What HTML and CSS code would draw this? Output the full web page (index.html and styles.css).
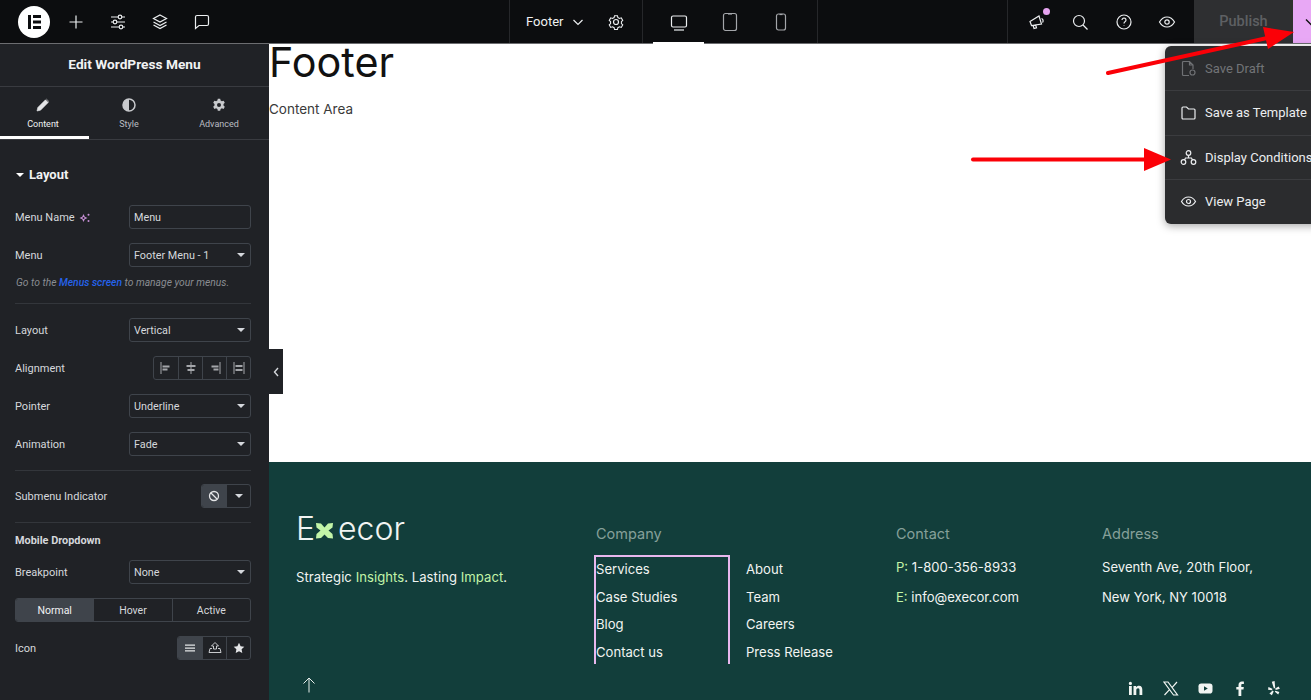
FILE: index.html
```html
<!DOCTYPE html>
<html lang="en">
<head>
<meta charset="utf-8">
<title>Elementor – Footer</title>
<link rel="stylesheet" href="styles.css">
</head>
<body>
<header class="topbar">
  <div class="tb-left">
    <span class="logo"><svg width="32" height="32" viewBox="0 0 32 32"><circle cx="16" cy="16" r="16" fill="#fff"/><path d="M10 9h3v14h-3zM15 9h8v3h-8zM15 14.500h8v3h-8zM15 20h8v3h-8z" fill="#0c0d0f"/></svg></span>
    <svg class="tb-ic" width="20" height="20" viewBox="0 0 20 20"><path d="M10 3.500v13M3.500 10h13" class="st"/></svg>
    <svg class="tb-ic" width="20" height="20" viewBox="0 0 20 20"><path d="M3 5h7M14 5h3M3 10h2M9 10h8M3 15h8M15 15h2" class="st"/><circle cx="12" cy="5" r="1.800" class="st"/><circle cx="7" cy="10" r="1.800" class="st"/><circle cx="13" cy="15" r="1.800" class="st"/></svg>
    <svg class="tb-ic" width="20" height="20" viewBox="0 0 20 20"><path d="M10 3l6.500 3.500L10 10 3.500 6.500zM3.500 10l6.500 3.500 6.500-3.500M3.500 13l6.500 3.500 6.500-3.500" class="st"/></svg>
    <svg class="tb-ic" width="20" height="20" viewBox="0 0 20 20"><path d="M5 3.500h10a1.500 1.500 0 0 1 1.500 1.500v7a1.500 1.500 0 0 1-1.500 1.500H7l-3.500 3V5A1.500 1.500 0 0 1 5 3.500z" class="st"/></svg>
  </div>
  <div class="tb-doc">
    <span class="doc-name">Footer</span>
    <svg width="12" height="12" viewBox="0 0 12 12"><path d="M1.500 4l4.500 4.500L10.500 4" class="st"/></svg>
    <svg class="doc-gear" width="18" height="18" viewBox="0 0 18 18"><path d="M7.400 2h3.200l.5 2.100 1.800 1 2-.7 1.600 2.800-1.500 1.500v2l1.500 1.500-1.600 2.800-2-.7-1.800 1-.5 2.100H7.400l-.5-2.100-1.800-1-2 .7-1.600-2.800 1.500-1.500v-2L1.500 7.200l1.600-2.800 2 .7 1.800-1z" transform="translate(.9 .9) scale(.9)" class="st"/><circle cx="9" cy="9" r="2.500" class="st"/></svg>
  </div>
  <div class="tb-devices">
    <span class="device active"><svg width="20" height="20" viewBox="0 0 20 20"><rect x="2.500" y="3" width="15" height="11" rx="1.500" class="st"/><path d="M5 17h10" class="st"/></svg></span>
    <span class="device"><svg width="20" height="20" viewBox="0 0 20 20"><rect x="3.500" y="1.500" width="13" height="17" rx="2" class="st dim"/><path d="M8 2h4" class="st dim"/></svg></span>
    <span class="device"><svg width="20" height="20" viewBox="0 0 20 20"><rect x="5.500" y="2" width="9" height="16" rx="2" class="st dim"/><path d="M8.500 2.500h3" class="st dim"/></svg></span>
  </div>
  <div class="tb-spacer"></div>
  <div class="tb-right">
    <span class="notify"><svg width="20" height="20" viewBox="0 0 20 20"><path d="M3 9.500l9-5.500 2.500 8-10 1.500zM6 13l1 3.500 2.500-.7-1-3.300M14.500 6.500a2.500 2.500 0 0 1 1 4" class="st"/></svg><i class="dot"></i></span>
    <svg width="20" height="20" viewBox="0 0 20 20"><circle cx="9" cy="9" r="5.500" class="st"/><path d="M13 13l4.500 4.500" class="st"/></svg>
    <svg width="20" height="20" viewBox="0 0 20 20"><circle cx="10" cy="10" r="7" class="st"/><path d="M8 8a2 2 0 1 1 3 1.800c-.7.400-1 .8-1 1.700M10 13.500v.600" class="st"/></svg>
    <svg width="20" height="20" viewBox="0 0 20 20"><path d="M2.500 10C4.500 6.500 7 5 10 5s5.500 1.500 7.500 5c-2 3.500-4.500 5-7.500 5s-5.500-1.500-7.500-5z" class="st"/><circle cx="10" cy="10" r="2.200" class="st"/></svg>
  </div>
  <div class="publish">Publish</div>
  <div class="publish-caret"><svg width="14" height="14" viewBox="0 0 14 14"><path d="M2 4.500l5 5 5-5" fill="none" stroke="#111" stroke-width="1.400"/></svg></div>
</header>

<div class="workspace">
  <aside class="panel">
    <div class="panel-title">Edit WordPress Menu</div>
    <nav class="panel-tabs">
      <div class="ptab active">
        <svg width="14" height="14" viewBox="0 0 14 14"><path d="M1 13l.8-3.500L9.500 1.800l2.700 2.700-7.700 7.700zM10.300 1l2.700 2.700" fill="#e4e5e7" stroke="#e4e5e7" stroke-width=".6"/></svg>
        <span>Content</span>
      </div>
      <div class="ptab">
        <svg width="14" height="14" viewBox="0 0 14 14"><circle cx="7" cy="7" r="6" fill="none" stroke="#c8cacd" stroke-width="1.500"/><path d="M7 1a6 6 0 0 0 0 12z" fill="#c8cacd"/></svg>
        <span>Style</span>
      </div>
      <div class="ptab">
        <svg width="14" height="14" viewBox="0 0 14 14"><path d="M5.800 .8h2.400l.4 1.800 1.300.7 1.700-.6 1.200 2.100-1.300 1.200v1.600l1.300 1.200-1.200 2.100-1.700-.6-1.300.7-.4 1.800H5.800l-.4-1.800-1.300-.7-1.700.6L1.200 8.800l1.300-1.200V6L1.200 4.800l1.200-2.100 1.700.6 1.300-.7z" fill="#c8cacd"/><circle cx="7" cy="6.900" r="2" fill="#202226"/></svg>
        <span>Advanced</span>
      </div>
    </nav>
    <div class="panel-body">
      <div class="section-head"><i class="caret white"></i>Layout</div>

      <div class="row"><label>Menu Name <svg class="ai" width="11" height="11" viewBox="0 0 11 11"><path d="M4.500 2l1.300 2.700L8.500 6 5.800 7.300 4.500 10 3.200 7.300.5 6l2.700-1.300z" fill="#c78fd6"/><circle cx="4.500" cy="6" r="1" fill="#202226"/><circle cx="9.500" cy="2.800" r="1" fill="#c78fd6"/><circle cx="9.500" cy="9" r="1" fill="#c78fd6"/></svg></label><div class="field">Menu</div></div>
      <div class="row"><label>Menu</label><div class="field sel">Footer Menu - 1<i class="caret"></i></div></div>
      <p class="note">Go to the <a>Menus screen</a> to manage your menus.</p>
      <hr class="sep first">

      <div class="row"><label>Layout</label><div class="field sel">Vertical<i class="caret"></i></div></div>
      <div class="row"><label>Alignment</label>
        <div class="btn-group align">
          <span><svg width="12" height="12" viewBox="0 0 12 12"><path d="M1 0v12" class="g"/><path d="M2.500 3.500h7v2h-7zM2.500 6.500h5v2h-5z" fill="#a4a6aa"/></svg></span>
          <span><svg width="12" height="12" viewBox="0 0 12 12"><path d="M6 0v12" class="g"/><path d="M1.500 3h9v2h-9zM2.500 7h7v2h-7z" fill="#a4a6aa"/></svg></span>
          <span><svg width="12" height="12" viewBox="0 0 12 12"><path d="M11 0v12" class="g"/><path d="M2.500 3.500h7v2h-7zM4.500 6.500h5v2h-5z" fill="#a4a6aa"/></svg></span>
          <span><svg width="12" height="12" viewBox="0 0 12 12"><path d="M1 0v12M11 0v12" class="g"/><path d="M2.500 3h7v2h-7zM2.500 7h7v2h-7z" fill="#a4a6aa"/></svg></span>
        </div>
      </div>
      <div class="row"><label>Pointer</label><div class="field sel">Underline<i class="caret"></i></div></div>
      <div class="row"><label>Animation</label><div class="field sel">Fade<i class="caret"></i></div></div>
      <hr class="sep second">

      <div class="row"><label>Submenu Indicator</label>
        <div class="btn-group indicator">
          <span class="on"><svg width="12" height="12" viewBox="0 0 12 12"><circle cx="6" cy="6" r="4.500" fill="none" stroke="#e4e5e7" stroke-width="1.300"/><path d="M3 3l6 6" stroke="#e4e5e7" stroke-width="1.300"/></svg></span>
          <span><i class="caret"></i></span>
        </div>
      </div>
      <hr class="sep third">

      <div class="subhead">Mobile Dropdown</div>
      <div class="row"><label>Breakpoint</label><div class="field sel">None<i class="caret"></i></div></div>
      <div class="state-tabs"><span class="on">Normal</span><span>Hover</span><span>Active</span></div>
      <div class="row"><label>Icon</label>
        <div class="btn-group icons">
          <span class="on"><svg width="12" height="12" viewBox="0 0 12 12"><path d="M1 2.500h10v1.300H1zM1 5.400h10v1.300H1zM1 8.300h10v1.300H1z" fill="#e4e5e7"/></svg></span>
          <span><svg width="14" height="14" viewBox="0 0 14 14"><path d="M7 1.500L10.500 5H8.500v3h-3V5H3.500zM4 7.500H2L1 11.500h12l-1-4h-2" fill="none" stroke="#c8cacd" stroke-width="1"/></svg></span>
          <span><svg width="12" height="12" viewBox="0 0 12 12"><path d="M6 .8l1.600 3.400 3.700.5-2.700 2.600.7 3.700L6 9.200l-3.300 1.800.7-3.700L.7 4.700l3.700-.5z" fill="#e4e5e7"/></svg></span>
        </div>
      </div>
    </div>
  </aside>

  <main class="canvas">
    <section class="content">
      <h1>Footer</h1>
      <p>Content Area</p>
    </section>
    <footer class="site-footer">
      <div class="brand">
        <div class="wordmark">E<svg width="19" height="19" viewBox="0 0 19 19"><path d="M1 2l5 .5 3.500 4 3.500-4 5-.5-.5 4.500L13.500 9.500l4 3.500.5 4.500-5-.5-3.500-3.500L6 17l-5 .5.500-4.500L5.500 9.500 1.500 6.500z" fill="#c3f5a8"/></svg>ecor</div>
        <p class="tagline">Strategic <em>Insights</em>. Lasting <em>Impact</em>.</p>
        <svg class="to-top" width="14" height="16" viewBox="0 0 14 16"><path d="M7 15.500V1M1.500 6.500L7 1l5.500 5.500" fill="none" stroke="#e8efec" stroke-width="1"/></svg>
      </div>
      <div class="col-company">
        <h4>Company</h4>
        <div class="menus">
          <ul class="menu picked"><li>Services</li><li>Case Studies</li><li>Blog</li><li>Contact us</li></ul>
          <ul class="menu"><li>About</li><li>Team</li><li>Careers</li><li>Press Release</li></ul>
        </div>
      </div>
      <div class="col-contact">
        <h4>Contact</h4>
        <ul class="menu contact"><li><em>P:</em> 1-800-356-8933</li><li><em>E:</em> info@execor.com</li></ul>
      </div>
      <div class="col-address">
        <h4>Address</h4>
        <ul class="menu contact"><li>Seventh Ave, 20th Floor,</li><li>New York, NY 10018</li></ul>
        <div class="social">
          <svg width="15" height="15" viewBox="0 0 15 15"><path d="M1 5h2.800v9H1zM2.400.8a1.600 1.600 0 1 1 0 3.200 1.600 1.600 0 0 1 0-3.200zM5.500 5h2.600v1.300C8.600 5.400 9.700 4.800 11 4.800c2.600 0 3.300 1.700 3.300 4V14h-2.800V9.300c0-1.200-.3-2-1.400-2-1.200 0-1.800.9-1.800 2.100V14H5.500z" fill="#f1f4f2"/></svg>
          <svg width="16" height="15" viewBox="0 0 16 15"><path d="M1 1h4l9.500 13h-4zM14 1L9 6.700M6.500 8.700L1.500 14" fill="none" stroke="#f1f4f2" stroke-width="1.200"/></svg>
          <svg width="15" height="15" viewBox="0 0 15 15"><rect x=".5" y="2.500" width="14" height="10" rx="2.800" fill="#f1f4f2"/><path d="M6 5.300l3.800 2.200L6 9.700z" fill="#123e3b"/></svg>
          <svg width="15" height="15" viewBox="0 0 15 15"><path d="M5.500 15V8.500H3.300V6h2.200V4.200C5.500 1.900 6.900.6 8.900.6c1 0 1.800.1 2 .1v2.300H9.600c-1.100 0-1.300.5-1.300 1.300V6h2.500l-.3 2.500H8.300V15z" fill="#f1f4f2"/></svg>
          <svg width="15" height="15" viewBox="0 0 15 15"><path d="M4.800.8L7.600 0l.6 7-1.300.5zM1.400 6l4 1.700-.3 1.600-4-.6zM2.400 12.600l3.200-3 1.100.8-1.800 3.900zM8.400 9.700l4 1.200-1.200 2.700-3.400-2.900zM8.200 7.600l3.400-2.200 1.300 2.400-4.200 1.300z" fill="#f1f4f2"/></svg>
        </div>
      </div>
    </footer>
  </main>
</div>

<button class="panel-toggle" type="button" aria-label="Collapse panel"><svg width="6" height="10" viewBox="0 0 6 10"><path d="M5 1L1.500 5 5 9" fill="none" stroke="#d5d8dc" stroke-width="1.400"/></svg></button>

<div class="pub-menu">
  <div class="pm-item disabled"><svg width="17" height="17" viewBox="0 0 17 17"><path d="M9 15.500H3.500a1 1 0 0 1-1-1v-12a1 1 0 0 1 1-1h6l3.500 3.500v4M9.500 1.500V5H13" class="st dim2"/><circle cx="12.500" cy="12.500" r="2.500" class="st dim2"/></svg>Save Draft</div>
  <div class="pm-item"><svg width="17" height="17" viewBox="0 0 17 17"><path d="M2 14V4a1 1 0 0 1 1-1h3.500l2 2h5.500a1 1 0 0 1 1 1v8a1 1 0 0 1-1 1H3a1 1 0 0 1-1-1z" class="st"/></svg>Save as Template</div>
  <div class="pm-item"><svg width="17" height="17" viewBox="0 0 17 17"><circle cx="8.500" cy="4" r="2.300" class="st"/><circle cx="3.500" cy="13" r="2.300" class="st"/><circle cx="13.500" cy="13" r="2.300" class="st"/><path d="M8.500 6.500v2.500M4.500 11l1-2h6l1 2" class="st"/></svg>Display Conditions</div>
  <div class="pm-item"><svg width="17" height="17" viewBox="0 0 17 17"><path d="M1.500 8.500C3.300 5.300 5.600 4 8.500 4s5.200 1.300 7 4.500c-1.800 3.200-4.100 4.500-7 4.500s-5.200-1.300-7-4.500z" class="st"/><circle cx="8.500" cy="8.500" r="2" class="st"/></svg>View Page</div>
</div>

<svg class="annot" width="1311" height="700" viewBox="0 0 1311 700" aria-hidden="true">
  <path d="M1108 73L1272 37" stroke="#fb0007" stroke-width="4" stroke-linecap="round"/>
  <path d="M1263 27L1294 32 1268 49z" fill="#fb0007"/>
  <path d="M973 159.500H1146" stroke="#fb0007" stroke-width="4" stroke-linecap="round"/>
  <path d="M1144 148L1171 159.500 1144 171z" fill="#fb0007"/>
</svg>
</body>
</html>
```
FILE: styles.css
```css
* { box-sizing: border-box; }
html, body { margin: 0; height: 100%; }
body {
  width: 1311px; height: 700px; overflow: hidden; position: relative;
  font-family: Roboto, "Liberation Sans", sans-serif; background: #fff;
  display: flex; flex-direction: column;
}
.st { fill: none; stroke: #eceef0; stroke-width: 1.200; }
.st.dim { stroke: #a4a6aa; }
.st.dim2 { stroke: #6f7174; }
em { font-style: normal; }
ul { list-style: none; margin: 0; padding: 0; }

/* top bar */
.topbar {
  height: 44px; flex: none; display: flex; background: #0c0d0f; color: #fff;
  border-bottom: 1px solid #6c6d70; align-items: stretch;
}
.tb-left { width: 510px; display: flex; align-items: center; padding-left: 18px; border-right: 1px solid #26272a; }
.logo { display: flex; margin-right: 16px; }
.tb-ic { margin-right: 22px; }
.tb-doc { width: 133px; display: flex; align-items: center; padding-left: 16px; font-size: 13px; color: #f0f1f2; border-right: 1px solid #26272a; }
.doc-name { width: 46px; }
.doc-gear { margin-left: 23px; }
.tb-devices { width: 175px; display: flex; align-items: stretch; padding-left: 10px; border-right: 1px solid #26272a; }
.device { width: 51px; display: flex; align-items: center; justify-content: center; }
.device.active { box-shadow: inset 0 -3px 0 #fff; height: 45px; }
.tb-spacer { width: 190px; border-right: 1px solid #26272a; }
.tb-right { width: 186px; display: flex; align-items: center; gap: 23.300px; padding-left: 19px; }
.notify { position: relative; display: flex; }
.dot { position: absolute; width: 7px; height: 7px; border-radius: 50%; background: #e6a4f0; top: -4px; right: -3px; }
.publish { width: 99px; background: #2e2f31; color: #5e6063; font-size: 14.500px; font-weight: 500; display: flex; align-items: center; justify-content: center; }
.publish-caret { flex: 1; background: #e8a8f5; display: flex; align-items: center; padding-left: 11px; overflow: hidden; }
.publish-caret svg { flex: none; }

/* layout */
.workspace { flex: 1; display: flex; min-height: 0; }
.panel { width: 269px; flex: none; background: #202226; color: #d5d8dc; font-size: 11px; overflow: hidden; }
.canvas { flex: 1; min-width: 0; display: flex; flex-direction: column; }

/* panel */
.panel-title { height: 43px; padding-bottom: 2px; border-bottom: 1px solid #393b40; color: #f1f2f3; font-size: 13.700px; font-weight: 700; display: flex; align-items: center; justify-content: center; }
.panel-tabs { display: grid; grid-template-columns: 89px 80px 100px; height: 53px; border-bottom: 1px solid #393b40; }
.ptab { display: flex; flex-direction: column; align-items: center; padding-top: 11px; gap: 7px; font-size: 9px; color: #babdc2; }
.ptab.active { color: #f1f2f3; box-shadow: inset 0 -3px 0 #fff; padding-right: 3px; }
.panel-body { padding: 27px 18px 0 15px; }
.section-head { display: flex; align-items: center; gap: 5px; height: 15px; padding-left: 1px; font-size: 13px; font-weight: 700; color: #f1f2f3; margin-bottom: 23px; }
.caret { display: block; width: 0; height: 0; border: 4px solid transparent; border-top: 4px solid #d5d8dc; border-bottom: 0; }
.caret.white { border-top-color: #fff; }
.row { display: flex; align-items: center; justify-content: space-between; height: 24px; margin-bottom: 14px; }
.row label { display: flex; align-items: center; gap: 4px; }
.field { width: 122px; height: 24px; border: 1px solid #3f444b; border-radius: 3px; padding: 0 5px 0 4px; display: flex; align-items: center; justify-content: space-between; color: #d5d8dc; font-size: 10.800px; }
.note { margin: -4px 0 0 1px; font-size: 10.300px; font-style: italic; color: #8a8d92; height: 12px; line-height: 12px; }
.note a { color: #2563eb; font-weight: 500; }
.sep { border: 0; border-top: 1px solid #33363b; margin: 0; }
.sep.first { margin: 14px 0 14px; }
.sep.second { margin: 0 0 13px; }
.sep.third { margin: 0 0 11px; }
.btn-group { display: flex; height: 24px; border: 1px solid #3f444b; border-radius: 3px; overflow: hidden; }
.btn-group span { display: flex; align-items: center; justify-content: center; border-left: 1px solid #3f444b; width: 24px; }
.btn-group span:first-child { border-left: 0; }
.btn-group span.on { background: #3f444b; }
.subhead { font-size: 10.900px; font-weight: 700; color: #d5d8dc; height: 13px; line-height: 13px; margin-bottom: 13px; }
.state-tabs { display: flex; height: 24px; border: 1px solid #3f444b; border-radius: 3px; overflow: hidden; margin-bottom: 14px; }
.state-tabs span { flex: 1; display: flex; align-items: center; justify-content: center; font-size: 10.500px; border-left: 1px solid #3f444b; }
.state-tabs span:first-child { border-left: 0; }
.state-tabs span.on { background: #3f444b; color: #f1f2f3; }

/* canvas */
.content { height: 418px; flex: none; background: #fff; color: #3a3a3a; font-family: Inter, "Open Sans", sans-serif; }
.content h1 { margin: 0; font-size: 41.300px; font-weight: 400; line-height: 37px; color: #111; }
.content p { margin: 20px 0 0; font-size: 13.500px; line-height: 16px; }

.site-footer {
  flex: 1; min-height: 0; background: #123e3b; color: #f1f4f2; position: relative;
  display: grid; grid-template-columns: 300px 300px 206px 1fr; padding: 51px 0 0 27px;
  font-family: Inter, "Open Sans", sans-serif; font-size: 13.100px; overflow: hidden;
}
.site-footer em { color: #c3f5a8; }
.site-footer h4 { margin: 13px 0 14px; font-size: 14.500px; font-weight: 400; line-height: 16px; color: #86a09a; }
.wordmark { display: flex; align-items: center; font-size: 32px; line-height: 30px; font-weight: 300; padding-top: 1px; }
.wordmark svg { margin: 2px 4px 0 0; }
.tagline { margin: 24px 0 0; line-height: 18px; letter-spacing: .05px; }
.to-top { display: block; margin: 91px 0 0 6px; }
.menus { display: flex; }
.menu li { height: 27.670px; line-height: 27.670px; white-space: nowrap; }
.menu.picked { width: 136px; height: 109px; margin: -1px 16px 0 -2px; border: 2px solid #e8b7ee; border-bottom: 0; }
.menu.picked li:first-child { margin-top: -1px; }
.contact { margin-top: -4px; }
.contact li { height: 30px; line-height: 30px; }
.col-address { position: relative; }
.social { position: absolute; left: 26px; top: 168px; display: flex; gap: 19.500px; }

/* overlays */
.panel-toggle { position: absolute; left: 269px; top: 349px; width: 14px; height: 45px; background: #202226; border: 0; padding: 0; display: flex; align-items: center; justify-content: center; }
.pub-menu { position: absolute; left: 1165px; top: 46px; width: 160px; height: 178px; background: #2b2c2e; border-radius: 6px; box-shadow: 0 2px 8px rgba(0,0,0,.35); color: #eceef0; font-size: 13px; }
.pm-item { height: 44.300px; display: flex; align-items: center; gap: 8px; padding-left: 15px; border-top: 1px solid #3b3c3f; white-space: nowrap; }
.pm-item:first-child { border-top: 0; }
.pm-item.disabled { color: #727477; }
.annot { position: absolute; left: 0; top: 0; pointer-events: none; }
.g { fill: none; stroke: #a4a6aa; stroke-width: 1; }
```
